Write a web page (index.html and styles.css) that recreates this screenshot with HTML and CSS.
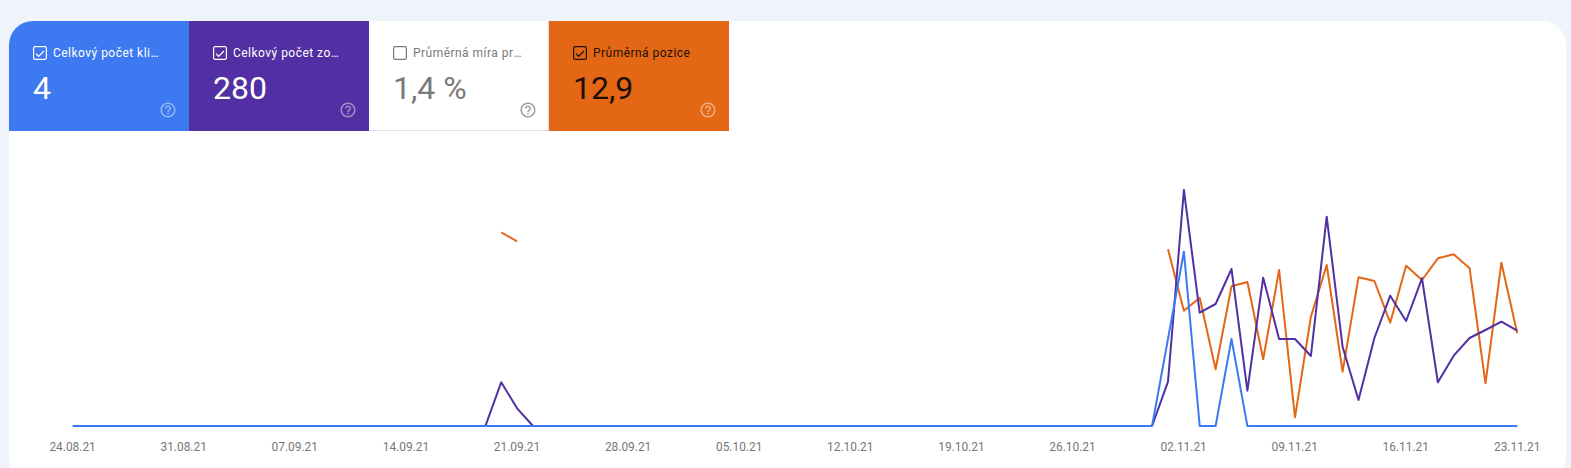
FILE: index.html
```html
<!DOCTYPE html>
<html lang="cs">
<head>
<meta charset="utf-8">
<title>Výkon</title>
<link rel="stylesheet" href="styles.css">
</head>
<body>
<main class="card">
  <section class="tiles">
    <div class="tile tile-clicks">
      <div class="tile-head">
        <svg class="check" viewBox="0 0 14 14"><rect class="check-box" x="0.6" y="0.6" width="12.8" height="12.8" rx="1.6"/><path class="check-mark" d="M3 7.6l2.6 2.8L11 5"/></svg>
        <span class="tile-label">Celkový počet kliknutí</span>
      </div>
      <div class="tile-value">4</div>
      <svg class="help" viewBox="0 0 24 24"><path d="M11 18h2v-2h-2v2zm1-16C6.48 2 2 6.48 2 12s4.48 10 10 10 10-4.48 10-10S17.52 2 12 2zm0 18c-4.41 0-8-3.59-8-8s3.59-8 8-8 8 3.59 8 8-3.59 8-8 8zm0-14c-2.21 0-4 1.79-4 4h2c0-1.1.9-2 2-2s2 .9 2 2c0 2-3 1.75-3 5h2c0-2.25 3-2.5 3-5 0-2.21-1.79-4-4-4z"/></svg>
    </div>
    <div class="tile tile-impressions">
      <div class="tile-head">
        <svg class="check" viewBox="0 0 14 14"><rect class="check-box" x="0.6" y="0.6" width="12.8" height="12.8" rx="1.6"/><path class="check-mark" d="M3 7.6l2.6 2.8L11 5"/></svg>
        <span class="tile-label">Celkový počet zobrazení</span>
      </div>
      <div class="tile-value">280</div>
      <svg class="help" viewBox="0 0 24 24"><path d="M11 18h2v-2h-2v2zm1-16C6.48 2 2 6.48 2 12s4.48 10 10 10 10-4.48 10-10S17.52 2 12 2zm0 18c-4.41 0-8-3.59-8-8s3.59-8 8-8 8 3.59 8 8-3.59 8-8 8zm0-14c-2.21 0-4 1.79-4 4h2c0-1.1.9-2 2-2s2 .9 2 2c0 2-3 1.75-3 5h2c0-2.25 3-2.5 3-5 0-2.21-1.79-4-4-4z"/></svg>
    </div>
    <div class="tile tile-ctr">
      <div class="tile-head">
        <svg class="check" viewBox="0 0 14 14"><rect class="check-box" x="0.6" y="0.6" width="12.8" height="12.8" rx="1.6"/></svg>
        <span class="tile-label">Průměrná míra prokliku</span>
      </div>
      <div class="tile-value">1,4 %</div>
      <svg class="help" viewBox="0 0 24 24"><path d="M11 18h2v-2h-2v2zm1-16C6.48 2 2 6.48 2 12s4.48 10 10 10 10-4.48 10-10S17.52 2 12 2zm0 18c-4.41 0-8-3.59-8-8s3.59-8 8-8 8 3.59 8 8-3.59 8-8 8zm0-14c-2.21 0-4 1.79-4 4h2c0-1.1.9-2 2-2s2 .9 2 2c0 2-3 1.75-3 5h2c0-2.25 3-2.5 3-5 0-2.21-1.79-4-4-4z"/></svg>
    </div>
    <div class="tile tile-position">
      <div class="tile-head">
        <svg class="check" viewBox="0 0 14 14"><rect class="check-box" x="0.6" y="0.6" width="12.8" height="12.8" rx="1.6"/><path class="check-mark" d="M3 7.6l2.6 2.8L11 5"/></svg>
        <span class="tile-label">Průměrná pozice</span>
      </div>
      <div class="tile-value">12,9</div>
      <svg class="help" viewBox="0 0 24 24"><path d="M11 18h2v-2h-2v2zm1-16C6.48 2 2 6.48 2 12s4.48 10 10 10 10-4.48 10-10S17.52 2 12 2zm0 18c-4.41 0-8-3.59-8-8s3.59-8 8-8 8 3.59 8 8-3.59 8-8 8zm0-14c-2.21 0-4 1.79-4 4h2c0-1.1.9-2 2-2s2 .9 2 2c0 2-3 1.75-3 5h2c0-2.25 3-2.5 3-5 0-2.21-1.79-4-4-4z"/></svg>
    </div>
  </section>
  <svg class="chart" viewBox="9 131 1557 337">
    <polyline class="line line-position" points="501.2,232.3 517.1,241.3"/>
    <polyline class="line line-position" points="1168,249.3 1183.9,310.7 1199.7,297.7 1215.6,369.3 1231.5,286.3 1247.4,282 1263.2,359.3 1279.1,270 1295,417.3 1310.9,316.7 1326.7,265 1342.6,371.7 1358.5,277.3 1374.4,281 1390.2,322.7 1406.1,265.7 1422,280 1437.9,258.3 1453.7,254.3 1469.6,268.3 1485.5,383.3 1501.4,262.7 1517.2,333.3"/>
    <polyline class="line line-impressions" points="485.4,426 501.2,382.3 517.1,408.3 533,426"/>
    <polyline class="line line-impressions" points="1152.1,426 1168,381.7 1183.9,190 1199.7,312.7 1215.6,304 1231.5,269 1247.4,390.7 1263.2,277.7 1279.1,339 1295,339 1310.9,356 1326.7,216.7 1342.6,346.7 1358.5,400 1374.4,338 1390.2,295.7 1406.1,321 1422,278.3 1437.9,382.3 1453.7,355.7 1469.6,338 1485.5,330 1501.4,321.7 1517.2,330.7"/>
    <polyline class="line line-clicks" points="72.6,426 1152.1,426 1183.9,251.7 1199.7,426 1215.6,426 1231.5,339 1247.4,426 1517.2,426"/>
    <text class="axis" x="72.6" y="451">24.08.21</text>
    <text class="axis" x="183.7" y="451">31.08.21</text>
    <text class="axis" x="294.8" y="451">07.09.21</text>
    <text class="axis" x="405.9" y="451">14.09.21</text>
    <text class="axis" x="517" y="451">21.09.21</text>
    <text class="axis" x="628.1" y="451">28.09.21</text>
    <text class="axis" x="739.2" y="451">05.10.21</text>
    <text class="axis" x="850.3" y="451">12.10.21</text>
    <text class="axis" x="961.4" y="451">19.10.21</text>
    <text class="axis" x="1072.5" y="451">26.10.21</text>
    <text class="axis" x="1183.6" y="451">02.11.21</text>
    <text class="axis" x="1294.7" y="451">09.11.21</text>
    <text class="axis" x="1405.8" y="451">16.11.21</text>
    <text class="axis" x="1517.2" y="451">23.11.21</text>
  </svg>
</main>
</body>
</html>
```
FILE: styles.css
```css
* { box-sizing: border-box; }

html, body {
  height: 468px;
  margin: 0;
  overflow: hidden;
}

body {
  background: #eff4fa;
  padding: 21px 5px 0 9px;
  font-family: Roboto, "Liberation Sans", sans-serif;
}

.card {
  height: 460px;
  background: #fff;
  border-radius: 24px;
  overflow: hidden;
}

.tiles {
  display: flex;
  height: 110px;
}

.tile {
  position: relative;
  width: 180px;
  padding: 25px 24px 0;
}

.tile-clicks { background: #3d7af1; color: #fff; }
.tile-impressions { background: #522fa2; color: #fff; }
.tile-ctr { background: #fff; color: #7a7a7a; border-bottom: 1px solid #dfe1e5; border-right: 1px solid #dfe1e5; }
.tile-position { background: #e46716; color: #1c1006; }

.tile-head {
  display: flex;
  align-items: center;
  gap: 6px;
  height: 14px;
}

.check {
  flex: none;
  width: 14px;
  height: 14px;
}

.check-box {
  fill: none;
  stroke: currentColor;
  stroke-width: 1.2;
}

.check-mark {
  fill: none;
  stroke: currentColor;
  stroke-width: 1.3;
}

.tile-label {
  min-width: 0;
  flex: 1;
  font-size: 12px;
  line-height: 16px;
  letter-spacing: 0.47px;
  white-space: nowrap;
  overflow: hidden;
  text-overflow: ellipsis;
}

.tile-value {
  margin-top: 8px;
  font-size: 32px;
  line-height: 40px;
  font-weight: 400;
}

.help {
  position: absolute;
  right: 12px;
  bottom: 12px;
  width: 18px;
  height: 18px;
  fill: #fff;
  opacity: 0.45;
}

.tile-ctr .help { fill: #757575; opacity: 0.7; right: 11px; bottom: 11px; }

.chart {
  display: block;
  width: 1557px;
  height: 337px;
}

.line {
  fill: none;
  stroke-width: 2;
  stroke-linejoin: round;
}

.line-clicks { stroke: #3d7af1; }
.line-impressions { stroke: #522fa2; }
.line-position { stroke: #e46716; }

.axis {
  font-size: 11.9px;
  fill: #777;
  text-anchor: middle;
}
```
